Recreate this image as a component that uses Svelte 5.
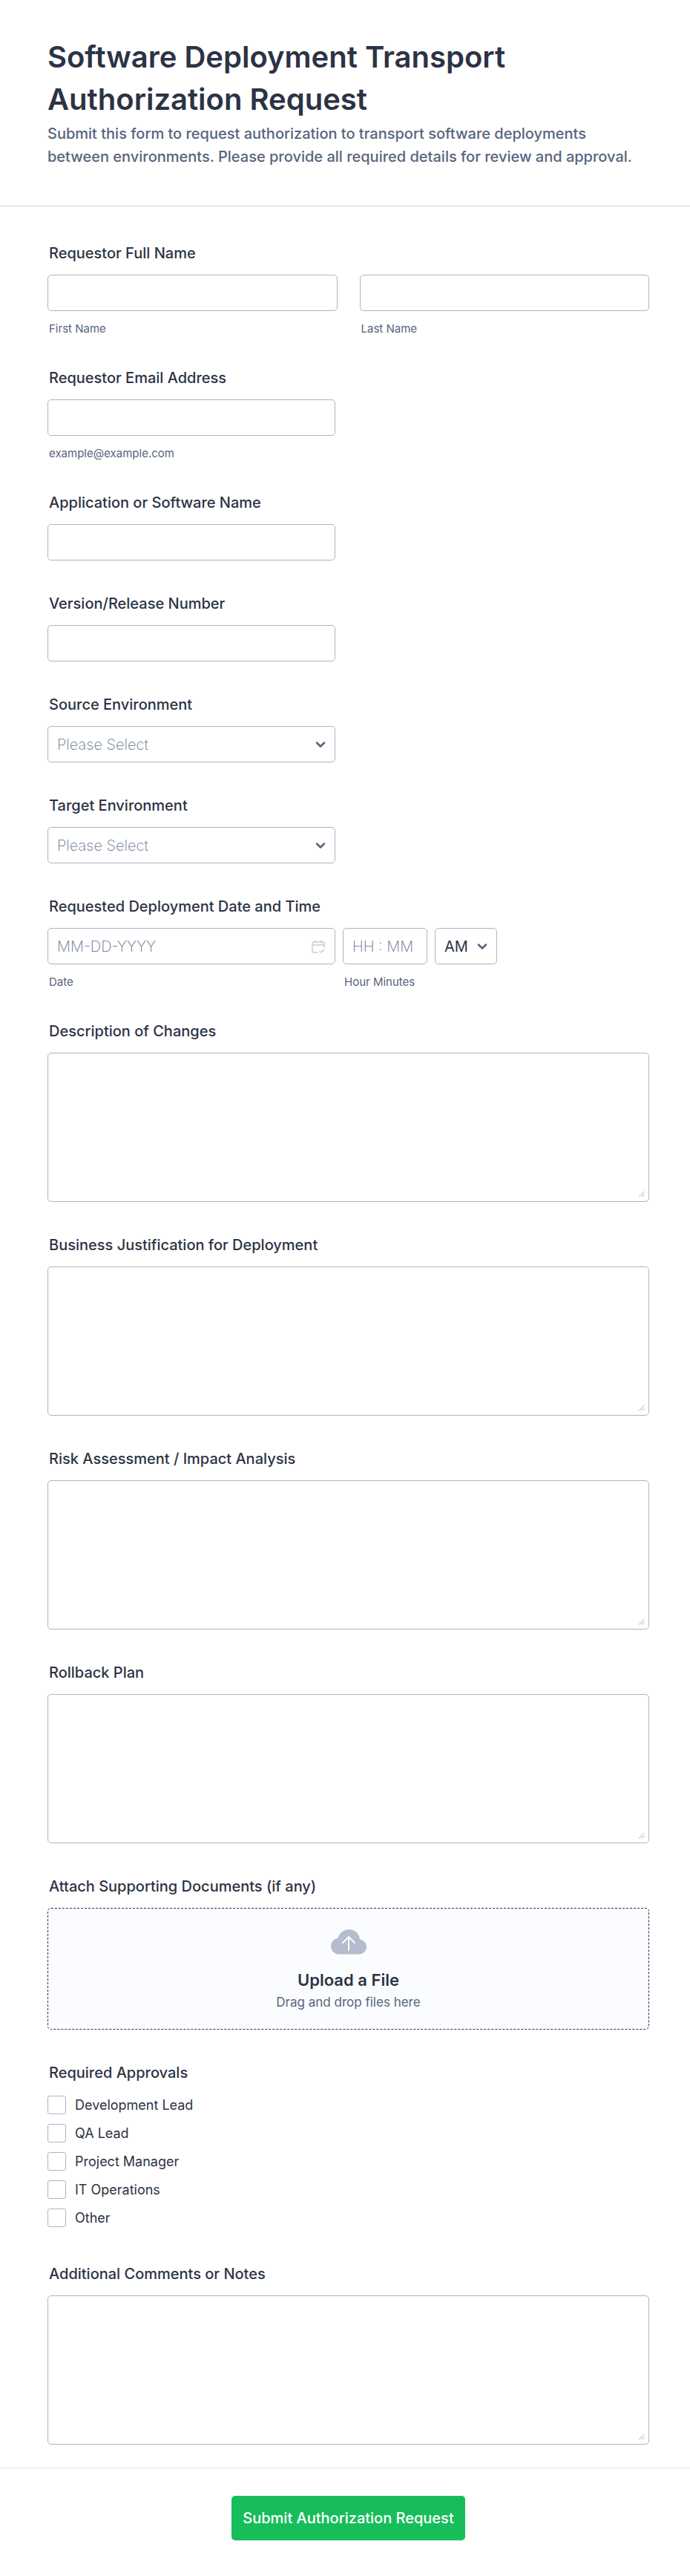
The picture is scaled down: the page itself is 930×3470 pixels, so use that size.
<script lang="ts">
	const environments = ['Development', 'Testing', 'Staging', 'Production'];
	const approvals = ['Development Lead', 'QA Lead', 'Project Manager', 'IT Operations', 'Other'];
	const details = [
		{ id: 'changes', label: 'Description of Changes' },
		{ id: 'justification', label: 'Business Justification for Deployment' },
		{ id: 'risk', label: 'Risk Assessment / Impact Analysis' },
		{ id: 'rollback', label: 'Rollback Plan' }
	];

	let source = $state('');
	let target = $state('');
	let period = $state('AM');
	let approved = $state<string[]>([]);

	function submit(event: SubmitEvent) {
		event.preventDefault();
	}
</script>

{#snippet chevron()}
	<svg class="select__arrow" viewBox="0 0 14 14" aria-hidden="true">
		<path d="M2 4.5l5 5 5-5" />
	</svg>
{/snippet}

{#snippet textField(id: string, label: string)}
	<div class="field">
		<label class="field__label" for={id}>{label}</label>
		<input class="control control--half" type="text" {id} name={id} />
	</div>
{/snippet}

{#snippet longField(id: string, label: string)}
	<div class="field">
		<label class="field__label" for={id}>{label}</label>
		<div class="area">
			<textarea class="control control--area" {id} name={id}></textarea>
			<svg class="area__grip" viewBox="0 0 9 9" aria-hidden="true">
				<path d="M1 8.5L8.5 1M5 8.5L8.5 5" />
			</svg>
		</div>
	</div>
{/snippet}

<form class="form" onsubmit={submit}>
	<header class="header">
		<h1 class="header__title">Software Deployment Transport Authorization Request</h1>
		<p class="header__text">
			Submit this form to request authorization to transport software deployments between
			environments. Please provide all required details for review and approval.
		</p>
	</header>

	<div class="fields">
		<fieldset class="field">
			<legend class="field__label">Requestor Full Name</legend>
			<div class="name">
				<div class="name__part">
					<input class="control" type="text" id="first" name="first" />
					<label class="field__hint" for="first">First Name</label>
				</div>
				<div class="name__part">
					<input class="control" type="text" id="last" name="last" />
					<label class="field__hint" for="last">Last Name</label>
				</div>
			</div>
		</fieldset>

		<div class="field">
			<label class="field__label" for="email">Requestor Email Address</label>
			<input
				class="control control--half"
				type="email"
				id="email"
				name="email"
				aria-describedby="email-hint"
			/>
			<span class="field__hint" id="email-hint">example@example.com</span>
		</div>

		{@render textField('application', 'Application or Software Name')}
		{@render textField('version', 'Version/Release Number')}

		<div class="field">
			<label class="field__label" for="source">Source Environment</label>
			<div class="select control--half">
				<select class="control control--empty" id="source" name="source" bind:value={source}>
					<option value="">Please Select</option>
					{#each environments as environment}
						<option>{environment}</option>
					{/each}
				</select>
				{@render chevron()}
			</div>
		</div>

		<div class="field">
			<label class="field__label" for="target">Target Environment</label>
			<div class="select control--half">
				<select class="control control--empty" id="target" name="target" bind:value={target}>
					<option value="">Please Select</option>
					{#each environments as environment}
						<option>{environment}</option>
					{/each}
				</select>
				{@render chevron()}
			</div>
		</div>

		<fieldset class="field">
			<legend class="field__label">Requested Deployment Date and Time</legend>
			<div class="schedule">
				<div class="schedule__date control--half">
					<div class="date">
						<input class="control" type="text" id="date" name="date" placeholder="MM-DD-YYYY" />
						<svg class="date__icon" viewBox="0 0 18 18" aria-hidden="true">
							<path
								d="M1 7h16M5 1v3M13 1v3M8 17H3a2 2 0 0 1-2-2V5a2 2 0 0 1 2-2h12a2 2 0 0 1 2 2v5M11 15l2 2 4-4"
							/>
						</svg>
					</div>
					<label class="field__hint" for="date">Date</label>
				</div>
				<div class="schedule__time">
					<input class="control" type="text" id="time" name="time" placeholder="HH : MM" />
					<label class="field__hint" for="time">Hour Minutes</label>
				</div>
				<div class="select schedule__period">
					<select class="control" name="period" aria-label="AM/PM Option" bind:value={period}>
						<option>AM</option>
						<option>PM</option>
					</select>
					{@render chevron()}
				</div>
			</div>
		</fieldset>

		{#each details as detail}
			{@render longField(detail.id, detail.label)}
		{/each}

		<div class="field">
			<label class="field__label" for="documents">Attach Supporting Documents (if any)</label>
			<label class="upload">
				<svg class="upload__icon" viewBox="0 0 48 34" aria-hidden="true">
					<path
						class="upload__cloud"
						d="M11 33.5C5 33.5 0 29 0 22.5C0 17 4 12.5 9.5 12C11 5 17 0 24.5 0C32 0 38.5 5.5 39 13.5C44 14.5 48 18.5 48 23.5C48 29 43.5 33.5 38 33.5Z"
					/>
					<path class="upload__arrow" d="M24 28V10M16 18l8-8 8 8" />
				</svg>
				<span class="upload__title">Upload a File</span>
				<span class="upload__text">Drag and drop files here</span>
				<input class="upload__input" type="file" id="documents" name="documents" multiple />
			</label>
		</div>

		<fieldset class="field">
			<legend class="field__label">Required Approvals</legend>
			<div class="approvals">
				{#each approvals as approval}
					<label class="approvals__item">
						<input
							class="approvals__box"
							type="checkbox"
							name="approvals"
							value={approval}
							bind:group={approved}
						/>
						{approval}
					</label>
				{/each}
			</div>
		</fieldset>

		{@render longField('comments', 'Additional Comments or Notes')}
	</div>

	<footer class="footer">
		<button class="footer__submit" type="submit">Submit Authorization Request</button>
	</footer>
</form>

<style>
	:global(body) {
		background: #fff;
	}

	.form {
		font-family: Inter, 'Liberation Sans', sans-serif;
		color: #2c3345;
	}

	.header {
		padding: 48px 64px 50px;
		border-bottom: 1px solid #d3d5e0;
	}

	.header__title {
		margin: 0 0 3px;
		font-size: 40px;
		font-weight: 600;
		line-height: 57px;
	}

	.header__text {
		margin: 0;
		font-size: 20px;
		font-weight: 500;
		line-height: 31px;
		color: #57647e;
	}

	.fields {
		display: flex;
		flex-direction: column;
		gap: 46px;
		padding: 51px 55px 31px 64px;
	}

	.field {
		display: flex;
		flex-direction: column;
		min-width: 0;
		margin: 0;
		padding: 0;
		border: 0;
	}

	.field__label {
		margin-bottom: 17px;
		padding: 0 2px;
		font-size: 20px;
		font-weight: 500;
		line-height: 24px;
	}

	.field__hint {
		display: block;
		margin-top: 16px;
		padding: 0 2px;
		font-size: 15px;
		line-height: 16px;
		color: #57647e;
	}

	.control {
		display: block;
		box-sizing: border-box;
		width: 100%;
		height: 49px;
		margin: 0;
		padding: 0 12px;
		border: 1px solid #adb3c6;
		border-radius: 5px;
		background: #fff;
		font-family: inherit;
		font-size: 20px;
		color: #2c3345;
		appearance: none;
	}

	.control::placeholder {
		font-weight: 200;
		color: #64748f;
		opacity: 1;
	}

	.control--half {
		max-width: 388px;
	}

	.control--empty {
		font-weight: 200;
		color: #64748f;
	}

	.control--area {
		height: 201px;
		padding: 12px;
		resize: vertical;
	}

	.control--area::-webkit-resizer {
		background: transparent;
	}

	.area {
		position: relative;
	}

	.area__grip {
		position: absolute;
		right: 6px;
		bottom: 6px;
		width: 9px;
		height: 9px;
		fill: none;
		stroke: #a4a9b5;
		pointer-events: none;
	}

	.name {
		display: grid;
		grid-template-columns: 1fr 1fr;
		gap: 30px;
	}

	.select {
		position: relative;
	}

	.select__arrow {
		position: absolute;
		top: 18px;
		right: 13px;
		width: 14px;
		height: 14px;
		fill: none;
		stroke: #57647e;
		stroke-width: 2.5;
		stroke-linecap: round;
		stroke-linejoin: round;
		pointer-events: none;
	}

	.schedule {
		display: flex;
		align-items: flex-start;
		gap: 10px;
	}

	.schedule__date {
		flex: 1;
	}

	.schedule__time {
		width: 114px;
	}

	.schedule__period {
		width: 84px;
	}

	.date {
		position: relative;
	}

	.date__icon {
		position: absolute;
		top: 16px;
		right: 14px;
		width: 18px;
		height: 18px;
		fill: none;
		stroke: #c8ccd8;
		stroke-width: 1.5;
		stroke-linecap: round;
		stroke-linejoin: round;
	}

	.upload {
		position: relative;
		display: flex;
		flex-direction: column;
		align-items: center;
		box-sizing: border-box;
		padding: 28px 16px 21px;
		border: 1px dashed #2c3345;
		border-radius: 5px;
		background: #fbfcff;
		cursor: pointer;
	}

	.upload__icon {
		width: 48px;
		height: 34px;
	}

	.upload__cloud {
		fill: #b4bccd;
	}

	.upload__arrow {
		fill: none;
		stroke: #fff;
		stroke-width: 2;
		stroke-linecap: round;
		stroke-linejoin: round;
	}

	.upload__title {
		margin-top: 18px;
		font-size: 22px;
		font-weight: 600;
		line-height: 32px;
	}

	.upload__text {
		font-size: 17px;
		line-height: 29px;
		color: #57647e;
	}

	.upload__input {
		position: absolute;
		inset: 0;
		opacity: 0;
		cursor: pointer;
	}

	.approvals {
		display: flex;
		flex-direction: column;
		gap: 13px;
		padding: 2px 0 5px;
	}

	.approvals__item {
		display: flex;
		align-items: center;
		gap: 12px;
		font-size: 18px;
		line-height: 25px;
	}

	.approvals__box {
		box-sizing: border-box;
		width: 25px;
		height: 25px;
		margin: 0;
		border: 1px solid #adb3c6;
		border-radius: 3px;
		background: #fff;
		appearance: none;
	}

	.approvals__box:checked {
		border-color: #18bd5b;
		background: #18bd5b;
	}

	.footer {
		display: flex;
		justify-content: center;
		padding: 37px 55px 49px 64px;
		border-top: 1px solid #ebebf3;
	}

	.footer__submit {
		height: 60px;
		padding: 0 15px;
		border: 0;
		border-radius: 5px;
		background: #18bd5b;
		font-family: inherit;
		font-size: 20px;
		font-weight: 500;
		color: #fff;
		cursor: pointer;
	}
</style>
